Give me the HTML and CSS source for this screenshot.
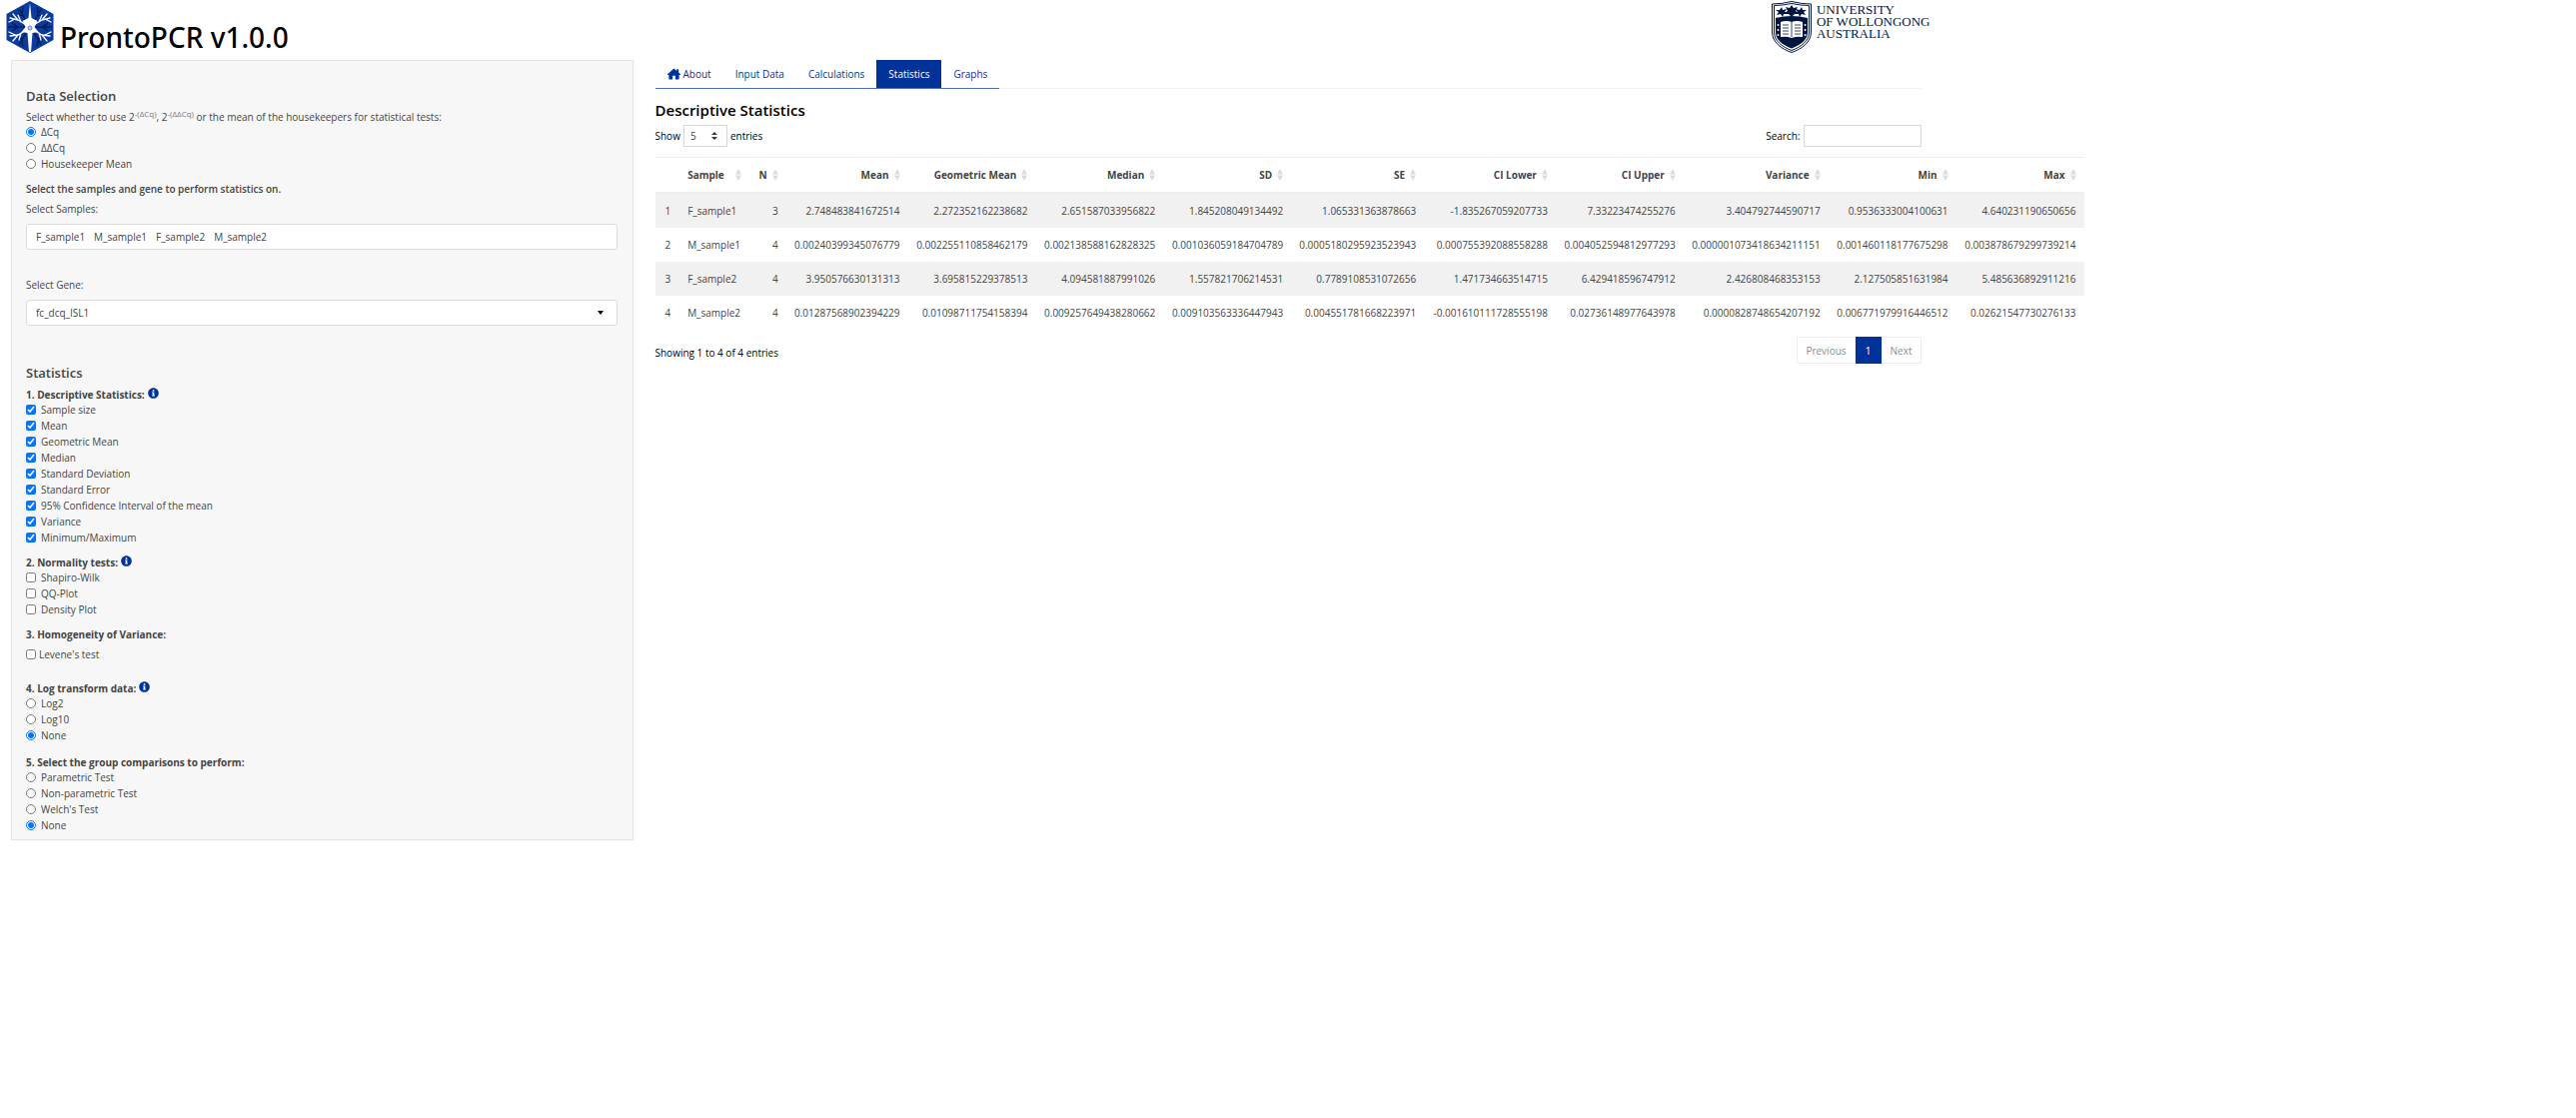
FILE: index.html
```html
<!DOCTYPE html>
<html lang="en">
<head>
<meta charset="utf-8">
<title>ProntoPCR v1.0.0</title>
<link rel="stylesheet" href="styles.css">
</head>
<body>
<svg class="sprite" aria-hidden="true">
  <symbol id="info" viewBox="0 0 512 512"><path fill="currentColor" d="M256 8C119 8 8 119 8 256s111 248 248 248 248-111 248-248S393 8 256 8zm0 84a44 44 0 1 1 0 88 44 44 0 0 1 0-88zm64 292c0 7-5 12-12 12h-104c-7 0-12-5-12-12v-28c0-7 5-12 12-12h14v-88h-14c-7 0-12-5-12-12v-28c0-7 5-12 12-12h80c7 0 12 5 12 12v128h12c7 0 12 5 12 12z"/></symbol>
  <symbol id="sort" viewBox="0 0 6 12"><path fill="currentColor" d="M3 0l3 5.500H0zM3 12l3-5.500H0z"/></symbol>
</svg>

<header class="masthead">
  <div class="brand">
    <svg class="brand-logo" viewBox="0 0 48 52" aria-hidden="true">
      <path fill="#0a3ba0" d="M24 0l23.500 13v26L24 52 .5 39V13z"/>
      <g fill="none" stroke="#051c52" stroke-width="1.300">
        <path d="M21 22L13 8M17 15l-6-2M16 13l1-7M27 22l8-14M31 15l6-2M32 13l-1-7M21 30l-8 14M17 37l-6 2M16 39l1 7M27 30l8 14M31 37l6 2M32 39l-1 7M19 26H2M12 26l-6-4M12 26l-6 4M29 26h17M36 26l6-4M36 26l6 4"/>
      </g>
      <g fill="none" stroke="#fff" stroke-width="1.300" stroke-linecap="round">
        <path d="M22 25L12 19 4 17M12 19L7 13M15 21l-3-7M9 18l-6 3M26 25l10-6 8-2M36 19l5-6M33 21l3-7M39 18l6 3M22 28l-10 6-8 1M12 34l-5 6M15 32l-2 7M9 34l-6-3M26 28l10 6 8 1M36 34l5 6M33 32l2 7M39 34l6-3"/>
      </g>
      <path fill="#fff" d="M24 2l1.500 15 6 3-3 6 4 5-6 1-1.500 19h-2L21.500 32l-6-1 4-5-3-6 6-3z"/>
      <circle cx="24" cy="27" r="2" fill="#c8d6f2" stroke="#5c7fc4"/>
    </svg>
    <h1>ProntoPCR v1.0.0</h1>
  </div>
  <div class="uow">
    <svg class="uow-shield" viewBox="0 0 40 52" aria-hidden="true">
      <path fill="#fff" stroke="#001641" d="M.5 3Q10 3 20 .5 30 3 39.500 3v28c0 10-9 17-19.500 20.500C9.500 48 .5 41 .5 31z"/>
      <path fill="#fff" stroke="#001641" d="M2.500 4.500Q11 4.500 20 2.500q9 2 17.500 2V31c0 9-8 15-17.500 18.500C10.500 46 2.500 40 2.500 31z"/>
      <path fill="#001641" d="M4 17q8-2 16-2t16 2v14c0 8-7 13-16 16.500C11 44 4 39 4 31z"/>
      <g fill="#001641"><path d="M10 6l1 3 4-1-2 3 3 2-4 0-1 3-2-3-4 1 2-3-3-2 4 0zM20 4l2 3 4-1-2 4 3 2-4 1-3 3-3-3-4-1 3-2-2-4 4 1zM30 6l1 3 4 0-3 2 2 3-4-1-2 3-1-3-4 0 3-2-2-3 4 1z"/></g>
      <path fill="#fff" d="M9 21q6-2 11 0 5-2 11 0v15q-6-1-11 1-5-2-11-1z"/>
      <path fill="none" stroke="#001641" d="M20 21v15M11 24h6M11 27h6M11 30h6M11 33h6M23 24h6M23 27h6M23 30h6M23 33h6" stroke-width=".8"/>
      <g fill="#fff"><circle cx="6.500" cy="24" r="1"/><circle cx="6.500" cy="29" r="1"/><circle cx="6.500" cy="34" r="1"/><circle cx="33.500" cy="24" r="1"/><circle cx="33.500" cy="29" r="1"/><circle cx="33.500" cy="34" r="1"/></g>
    </svg>
    <div class="uow-name">UNIVERSITY<br>OF WOLLONGONG<br>AUSTRALIA</div>
  </div>
</header>

<div class="layout">
  <form class="sidebar">
    <h2>Data Selection</h2>
    <p class="intro">Select whether to use 2<sup>-(ΔCq)</sup>, 2<sup>-(ΔΔCq)</sup> or the mean of the housekeepers for statistical tests:</p>
    <label class="option"><input type="radio" name="metric" checked>ΔCq</label>
    <label class="option"><input type="radio" name="metric">ΔΔCq</label>
    <label class="option"><input type="radio" name="metric">Housekeeper Mean</label>

    <h3 class="samples">Select the samples and gene to perform statistics on.</h3>
    <label class="field-label" for="samples">Select Samples:</label>
    <div class="control tags">
      <span>F_sample1</span><span>M_sample1</span><span>F_sample2</span><span>M_sample2</span>
      <input id="samples" type="text">
    </div>
    <label class="field-label gene-label" for="gene">Select Gene:</label>
    <div class="select-wrap">
      <select class="control" id="gene"><option>fc_dcq_ISL1</option></select>
      <svg class="caret" viewBox="0 0 6 4" aria-hidden="true"><path d="M0 0h6L3 4z"/></svg>
    </div>

    <h2 class="section">Statistics</h2>
    <h3 class="first">1. Descriptive Statistics: <svg class="info"><use href="#info"/></svg></h3>
    <label class="option"><input type="checkbox" checked>Sample size</label>
    <label class="option"><input type="checkbox" checked>Mean</label>
    <label class="option"><input type="checkbox" checked>Geometric Mean</label>
    <label class="option"><input type="checkbox" checked>Median</label>
    <label class="option"><input type="checkbox" checked>Standard Deviation</label>
    <label class="option"><input type="checkbox" checked>Standard Error</label>
    <label class="option"><input type="checkbox" checked>95% Confidence Interval of the mean</label>
    <label class="option"><input type="checkbox" checked>Variance</label>
    <label class="option"><input type="checkbox" checked>Minimum/Maximum</label>

    <h3>2. Normality tests: <svg class="info"><use href="#info"/></svg></h3>
    <label class="option"><input type="checkbox">Shapiro-Wilk</label>
    <label class="option"><input type="checkbox">QQ-Plot</label>
    <label class="option"><input type="checkbox">Density Plot</label>

    <h3>3. Homogeneity of Variance:</h3>
    <label class="option single"><input type="checkbox">Levene's test</label>

    <h3 class="spaced">4. Log transform data: <svg class="info"><use href="#info"/></svg></h3>
    <label class="option"><input type="radio" name="log">Log2</label>
    <label class="option"><input type="radio" name="log">Log10</label>
    <label class="option"><input type="radio" name="log" checked>None</label>

    <h3 class="last">5. Select the group comparisons to perform:</h3>
    <label class="option"><input type="radio" name="test">Parametric Test</label>
    <label class="option"><input type="radio" name="test">Non-parametric Test</label>
    <label class="option"><input type="radio" name="test">Welch's Test</label>
    <label class="option"><input type="radio" name="test" checked>None</label>
  </form>

  <main class="main">
    <nav class="tabs">
      <a href="#about"><svg class="home" viewBox="0 0 14 12" aria-hidden="true"><path fill="currentColor" d="M7 0l3 2.700V1h2v3.500L14 6.300V7h-1.500v4.500a.5.500 0 0 1-.5.500H8.500V8h-3v4H2a.5.500 0 0 1-.5-.5V7H0v-.7z"/></svg>About</a>
      <a href="#input">Input Data</a>
      <a href="#calculations">Calculations</a>
      <a href="#statistics" class="active" aria-current="page">Statistics</a>
      <a href="#graphs">Graphs</a>
    </nav>
    <h2>Descriptive Statistics</h2>
    <div class="toolbar">
      <label class="length">Show
        <span class="select-wrap"><select><option>5</option></select>
        <svg class="updown" viewBox="0 0 6 8" aria-hidden="true"><path d="M3 0l3 3H0zM3 8l3-3H0z"/></svg></span>
        entries</label>
      <label class="search">Search: <input type="search"></label>
    </div>
    <table>
      <colgroup><col class="c-row"><col class="c-sample"><col class="c-n"><col class="c-mean"><col class="c-std"><col class="c-std"><col class="c-std"><col class="c-wide"><col class="c-wide"><col class="c-std"><col class="c-var"><col class="c-std"><col class="c-std"></colgroup>
      <thead>
        <tr>
          <th></th>
          <th class="name"><span>Sample<svg><use href="#sort"/></svg></span></th>
          <th><span>N<svg><use href="#sort"/></svg></span></th>
          <th><span>Mean<svg><use href="#sort"/></svg></span></th>
          <th><span>Geometric Mean<svg><use href="#sort"/></svg></span></th>
          <th><span>Median<svg><use href="#sort"/></svg></span></th>
          <th><span>SD<svg><use href="#sort"/></svg></span></th>
          <th><span>SE<svg><use href="#sort"/></svg></span></th>
          <th><span>CI Lower<svg><use href="#sort"/></svg></span></th>
          <th><span>CI Upper<svg><use href="#sort"/></svg></span></th>
          <th><span>Variance<svg><use href="#sort"/></svg></span></th>
          <th><span>Min<svg><use href="#sort"/></svg></span></th>
          <th><span>Max<svg><use href="#sort"/></svg></span></th>
        </tr>
      </thead>
      <tbody>
        <tr><td>1</td><td class="name">F_sample1</td><td>3</td><td>2.748483841672514</td><td>2.272352162238682</td><td>2.651587033956822</td><td>1.845208049134492</td><td>1.065331363878663</td><td>-1.835267059207733</td><td>7.33223474255276</td><td>3.404792744590717</td><td>0.9536333004100631</td><td>4.640231190650656</td></tr>
        <tr><td>2</td><td class="name">M_sample1</td><td>4</td><td>0.00240399345076779</td><td>0.002255110858462179</td><td>0.002138588162828325</td><td>0.001036059184704789</td><td>0.0005180295923523943</td><td>0.000755392088558288</td><td>0.004052594812977293</td><td>0.000001073418634211151</td><td>0.001460118177675298</td><td>0.003878679299739214</td></tr>
        <tr><td>3</td><td class="name">F_sample2</td><td>4</td><td>3.950576630131313</td><td>3.695815229378513</td><td>4.094581887991026</td><td>1.557821706214531</td><td>0.7789108531072656</td><td>1.471734663514715</td><td>6.429418596747912</td><td>2.426808468353153</td><td>2.127505851631984</td><td>5.485636892911216</td></tr>
        <tr><td>4</td><td class="name">M_sample2</td><td>4</td><td>0.01287568902394229</td><td>0.01098711754158394</td><td>0.009257649438280662</td><td>0.009103563336447943</td><td>0.004551781668223971</td><td>-0.001610111728555198</td><td>0.02736148977643978</td><td>0.0000828748654207192</td><td>0.006771979916446512</td><td>0.02621547730276133</td></tr>
      </tbody>
    </table>
    <div class="footer">
      <p>Showing 1 to 4 of 4 entries</p>
      <div class="pager"><button type="button" disabled>Previous</button><button type="button" class="current">1</button><button type="button" disabled>Next</button></div>
    </div>
  </main>
</div>
</body>
</html>
```
FILE: styles.css
```css
* { box-sizing: border-box; }

body {
  margin: 0;
  background: #fff;
  color: #000;
  font: 10px/16px "Open Sans", "Noto Sans", sans-serif;
}

h1, h2, h3, p { margin: 0; }
input, select, button { font: inherit; color: inherit; }
.sprite { position: absolute; width: 0; height: 0; }

/* Header */
.masthead {
  display: flex;
  justify-content: space-between;
  width: 75%;
  padding: 1px 2px 7px 6px;
}
.brand { display: flex; align-items: flex-end; gap: 6px; }
.brand-logo { width: 48px; height: 52px; }
.brand h1 { font-size: 28px; line-height: 32px; font-family: "Noto Sans", "Open Sans", sans-serif; font-weight: 500; }
.uow { display: flex; gap: 5px; }
.uow-shield { width: 40px; height: 52px; }
.uow-name {
  padding-top: 3px;
  color: #001641;
  font: 13px/12px "Liberation Serif", serif;
  white-space: nowrap;
}

/* Two-column page */
.layout {
  display: grid;
  grid-template-columns: minmax(0, 1fr) minmax(0, 2fr);
  align-items: start;
  width: 75%;
}

/* Sidebar */
.sidebar {
  margin: 0 11px;
  padding: 25px 15px 6px 14px;
  border: 1px solid #e3e3e3;
  background: #f7f7f7;
  color: #444;
}
.sidebar h2 { font-size: 13px; line-height: 20px; font-weight: 600; }
.sidebar h2.section { margin-top: 37px; }
.sidebar h3 {
  display: flex;
  gap: 3px;
  margin: 9px 0 -1px;
  font-size: 10px;
  font-weight: 700;
}
.sidebar h3.samples { font-weight: 600; }
.sidebar h3.first { margin-top: 4px; }
.sidebar h3.spaced { margin-top: 18px; }
.sidebar h3.last { margin-top: 11px; }
.intro { margin: 3px 0 -1px; }
.intro sup { font-size: 8px; line-height: 0; color: #777; }
.info { width: 11px; height: 11px; margin-top: 1px; color: #003399; }

.option { display: flex; align-items: center; gap: 5px; }
.option input { width: 10px; height: 10px; margin: 0; }
.option.single { gap: 3px; margin-top: 5px; }

.field-label { display: block; margin: 5px 0 7px; }
.gene-label { margin-top: 27px; }
.control {
  width: 100%;
  height: 26px;
  padding: 0 9px;
  border: 1px solid #dcdcdc;
  border-radius: 3px;
  background: #fff;
}
.tags { display: flex; align-items: center; gap: 9px; }
.tags input { flex: 1; min-width: 0; border: 0; outline: 0; background: none; }
.select-wrap { display: block; position: relative; }
select { appearance: none; border-radius: 0; }
.caret { position: absolute; right: 14px; top: 11px; width: 6px; height: 4px; pointer-events: none; }

/* Main column */
.main { margin: 0 11px; }
.tabs { display: flex; border-bottom: 1px solid #f2f2f2; }
.tabs a {
  display: flex;
  align-items: center;
  gap: 3px;
  height: 29px;
  margin-bottom: -1px;
  padding: 0 12px;
  border-bottom: 1px solid #4d70b8;
  color: #003399;
  text-decoration: none;
}
.tabs a.active { background: #003399; color: #fff; }
.home { width: 13px; height: 12px; }
.main h2 { margin-top: 11px; font-size: 15px; line-height: 20px; font-weight: 600; }

.toolbar { display: flex; justify-content: space-between; margin-top: 5px; }
.toolbar label { display: flex; align-items: center; gap: 3px; }
.toolbar select, .toolbar input {
  display: block;
  height: 22px;
  border: 1px solid #d6d6dc;
  border-radius: 0;
  background: #fff;
}
.toolbar select { width: 44px; padding: 0 6px; color: #444; }
.toolbar input { width: 118px; }
.updown { position: absolute; right: 10px; top: 7px; width: 6px; height: 8px; fill: #343a40; pointer-events: none; }

table {
  width: 1430px;
  margin-top: 10px;
  border-collapse: separate;
  border-spacing: 0;
  border-top: 1px solid #eee;
  color: #444;
}
th, td { height: 34px; padding: 0 8px; text-align: right; white-space: nowrap; }
th { height: 36px; font-weight: 700; border-bottom: 2px solid #eee; }
th span { display: flex; align-items: center; justify-content: flex-end; gap: 5px; }
th svg { width: 6px; height: 12px; color: #ddd; }
.name { padding-left: 9px; text-align: left; }
.name span { justify-content: space-between; }
tbody tr:nth-child(odd) { background: #f1f1f1; }
.c-row { width: 24px; }
.c-sample { width: 71px; }
.c-n { width: 37px; }
.c-mean { width: 122px; }
.c-std { width: 128px; }
.c-wide { width: 132px; }
.c-var { width: 145px; }

.footer { display: flex; justify-content: space-between; margin-top: 7px; }
.footer p { padding-top: 8px; }
.pager { display: flex; }
.pager button {
  height: 27px;
  padding: 0 8px;
  border: 1px solid #eee;
  background: #fff;
  color: #868e96;
}
.pager .current { width: 26px; border-color: #003399; background: #003399; color: #fff; }
```
